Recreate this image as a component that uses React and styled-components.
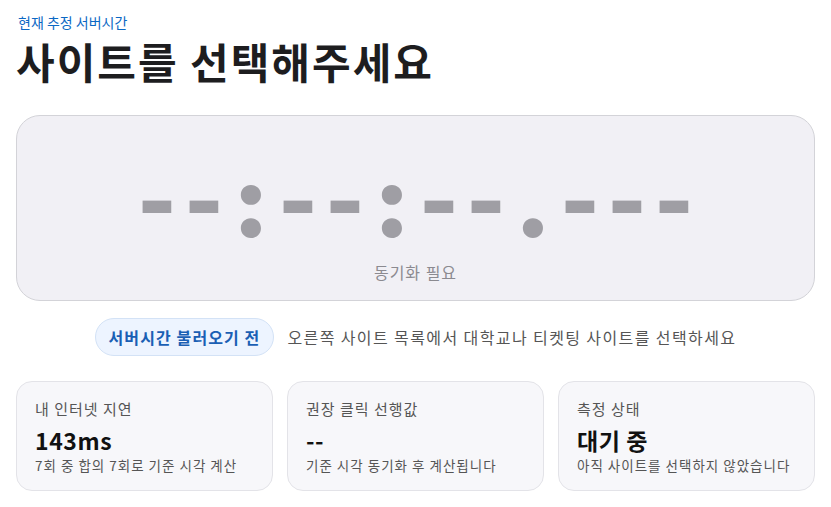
import React from 'react';
import styled, { createGlobalStyle } from 'styled-components';

const GlobalStyle = createGlobalStyle`
    body {
        margin: 0;
        background: #fff;
        font-family: 'Noto Sans CJK KR', 'Noto Sans', sans-serif;
        color: #1d1d1f;
    }
`;

const CLOCK = '--:--:--.---';

const stats = [
    { label: '내 인터넷 지연', value: '143ms', sub: '7회 중 합의 7회로 기준 시각 계산' },
    { label: '권장 클릭 선행값', value: '--', sub: '기준 시각 동기화 후 계산됩니다' },
    { label: '측정 상태', value: '대기 중', sub: '아직 사이트를 선택하지 않았습니다' },
];

export default function App() {
    return (
        <Page>
            <GlobalStyle />
            <Eyebrow>현재 추정 서버시간</Eyebrow>
            <Title>사이트를 선택해주세요</Title>
            <ClockPanel>
                <ClockFace>
                    {CLOCK.split('').map((ch, i) => (
                        <ClockChar key={i} $sep={ch !== '-'}>{ch}</ClockChar>
                    ))}
                </ClockFace>
                <ClockNote>동기화 필요</ClockNote>
            </ClockPanel>
            <StatusRow>
                <Pill>서버시간 불러오기 전</Pill>
                <Hint>오른쪽 사이트 목록에서 대학교나 티켓팅 사이트를 선택하세요</Hint>
            </StatusRow>
            <Cards>
                {stats.map((s) => (
                    <Card key={s.label}>
                        <CardLabel>{s.label}</CardLabel>
                        <CardValue>{s.value}</CardValue>
                        <CardSub>{s.sub}</CardSub>
                    </Card>
                ))}
            </Cards>
        </Page>
    );
}

// STYLE
const Page = styled.div`
    padding: 12px 16px 16px;
`;
const Eyebrow = styled.div`
    font-size: 14px;
    line-height: 20px;
    color: #0b68c4;
    padding-left: 2px;
`;
const Title = styled.h1`
    margin: 2px 0 0;
    font-size: 42px;
    line-height: 54px;
    font-weight: 700;
    letter-spacing: 2px;
    color: #1d1d1f;
`;
const ClockPanel = styled.div`
    margin-top: 27px;
    height: 186px;
    box-sizing: border-box;
    border: 1px solid #d3d3d8;
    border-radius: 24px;
    background: #f1f0f5;
    display: flex;
    flex-direction: column;
    align-items: center;
    padding-top: 55px;
`;
const ClockFace = styled.div`
    display: flex;
    align-items: center;
    height: 60px;
    font-family: Inter, 'Noto Sans', sans-serif;
    font-weight: 900;
    line-height: 60px;
    color: #9f9ea4;
`;
const ClockChar = styled.span`
    display: inline-block;
    width: 47px;
    text-align: center;
    font-size: ${(props) => (props.$sep ? '100px' : '84px')};
`;
const ClockNote = styled.div`
    margin-top: 29px;
    font-size: 16px;
    letter-spacing: 1px;
    color: #8b8a90;
`;
const StatusRow = styled.div`
    display: flex;
    align-items: center;
    justify-content: center;
    gap: 13px;
    margin-top: 17px;
`;
const Pill = styled.div`
    height: 38px;
    box-sizing: border-box;
    padding: 0 13px;
    display: flex;
    align-items: center;
    border: 1px solid #d3e2f6;
    border-radius: 19px;
    background: #edf4ff;
    color: #1a5fb4;
    font-size: 16px;
    letter-spacing: 1.1px;
    font-weight: 700;
`;
const Hint = styled.div`
    font-size: 16px;
    letter-spacing: 1.4px;
    color: #555;
`;
const Cards = styled.div`
    display: grid;
    grid-template-columns: repeat(3, 1fr);
    gap: 14px;
    margin-top: 25px;
`;
const Card = styled.div`
    height: 110px;
    box-sizing: border-box;
    border: 1px solid #e3e3e8;
    border-radius: 16px;
    background: #f7f7fa;
    padding: 17px 18px 0;
`;
const CardLabel = styled.div`
    font-size: 15px;
    line-height: 20px;
    letter-spacing: 1px;
    color: #555;
`;
const CardValue = styled.div`
    margin-top: 8px;
    font-size: 23px;
    line-height: 26px;
    letter-spacing: 0.6px;
    font-weight: 700;
    color: #111;
`;
const CardSub = styled.div`
    margin-top: 3px;
    font-size: 13.5px;
    line-height: 18px;
    letter-spacing: 1px;
    color: #555;
`;
